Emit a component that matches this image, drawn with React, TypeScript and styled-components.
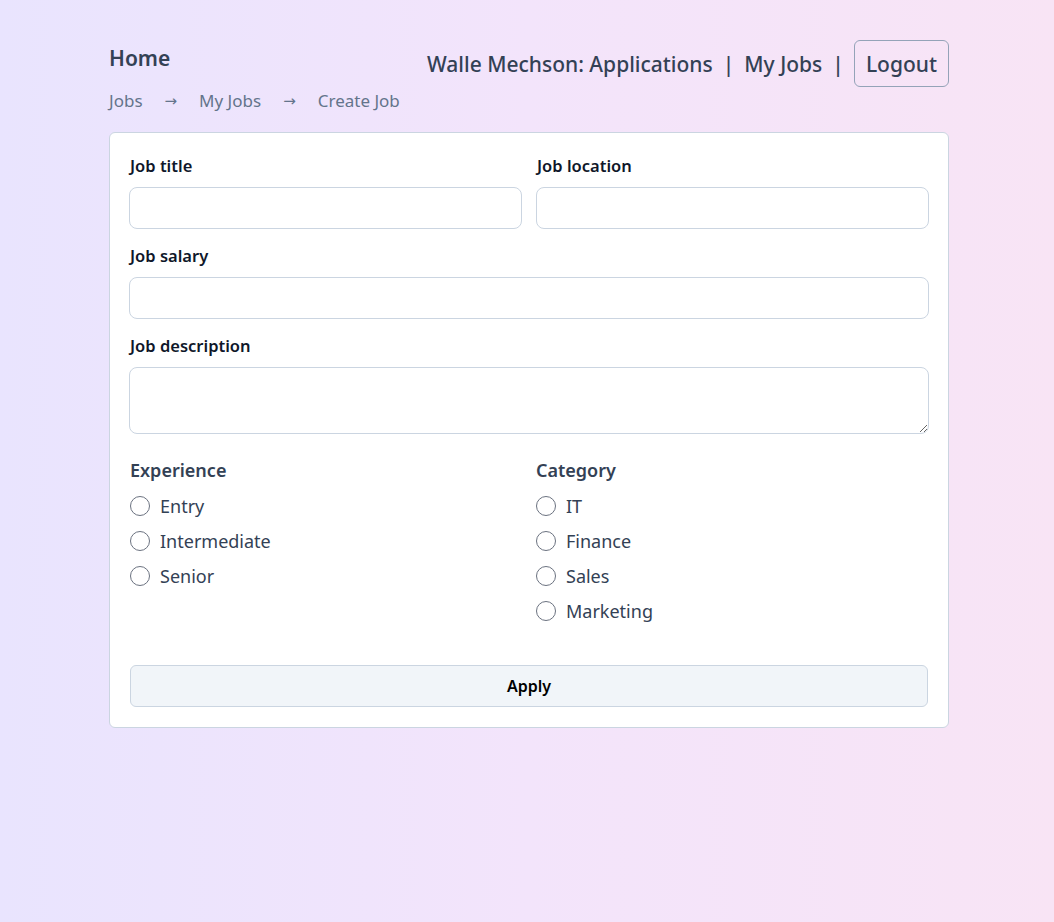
import React from "react";
import styled, { createGlobalStyle } from "styled-components";

const Global = createGlobalStyle`
  html, body { margin: 0; padding: 0; }
  body {
    min-height: 922px;
    padding-left: 4px;
    background: linear-gradient(90deg, #e9e4fe 0%, #f3e4fb 50%, #f8e4f5 100%);
    font-family: "Noto Sans", "Open Sans", sans-serif;
    color: #334155;
  }
  * { box-sizing: border-box; }
`;

const Page = styled.div`
  width: 840px;
  margin: 0 auto;
  padding-top: 40px;
`;

const Header = styled.header`
  display: flex;
  justify-content: space-between;
  align-items: flex-start;
  margin-bottom: 19px;
`;

const LeftCol = styled.div`
  display: flex;
  flex-direction: column;
`;

const Brand = styled.a`
  font-size: 21px;
  font-weight: 600;
  color: #334155;
  line-height: 34px;
  margin-top: 1px;
  text-decoration: none;
`;

const Crumbs = styled.nav`
  display: flex;
  gap: 22px;
  font-size: 17px;
  color: #64748b;
  line-height: 24px;
  margin-top: 14px;
`;

const Arrow = styled.span`
  font-family: "DejaVu Sans", sans-serif;
  font-size: 15px;
`;

const Nav = styled.nav`
  display: flex;
  align-items: center;
  gap: 10px;
  font-size: 21px;
  font-weight: 500;
  color: #334155;
`;

const Logout = styled.button`
  height: 47px;
  padding: 0 11px;
  border: 1px solid #94a3b8;
  border-radius: 6px;
  background: transparent;
  font: inherit;
  font-size: 21px;
  color: #334155;
`;

const Card = styled.form`
  background: #fff;
  border: 1px solid #cbd5e1;
  border-radius: 6px;
  padding: 21px 20px 20px 20px;
  display: flex;
  flex-direction: column;
`;

const Row = styled.div`
  display: grid;
  grid-template-columns: 1fr 1fr;
  column-gap: 14px;
  margin: 0 -1px;
`;

const Field = styled.div<{ $wide?: boolean; $mb?: number }>`
  display: flex;
  flex-direction: column;
  grid-column: ${(p) => (p.$wide ? "1 / span 2" : "auto")};
  margin-bottom: ${(p) => p.$mb ?? 15}px;
`;

const Label = styled.label`
  font-size: 16.5px;
  font-weight: 600;
  color: #0f172a;
  line-height: 24px;
  margin: 0 1px 9px;
`;

const Input = styled.input`
  height: 42px;
  border: 1px solid #cbd5e1;
  border-radius: 8px;
  background: #fff;
  font: inherit;
  padding: 0 10px;
  outline: none;
`;

const TextArea = styled.textarea`
  height: 67px;
  border: 1px solid #cbd5e1;
  border-radius: 8px;
  font: inherit;
  padding: 8px 10px;
  outline: none;
`;

const Groups = styled.div`
  display: grid;
  grid-template-columns: 1fr 1fr;
  column-gap: 14px;
  margin-top: 7px;
`;

const Group = styled.fieldset`
  border: none;
  margin: 0;
  padding: 0;
  display: flex;
  flex-direction: column;
`;

const Legend = styled.div`
  font-size: 18px;
  font-weight: 600;
  color: #334155;
  line-height: 27px;
  margin-bottom: 4px;
`;

const Option = styled.label`
  display: flex;
  align-items: center;
  gap: 10px;
  height: 35px;
  font-size: 18px;
  color: #334155;
`;

const Radio = styled.span`
  width: 20px;
  height: 20px;
  border: 1.5px solid #6b7280;
  border-radius: 50%;
  background: #fff;
  flex: none;
`;

const Apply = styled.button`
  margin-top: 37px;
  height: 42px;
  width: 100%;
  border: 1px solid #cbd5e1;
  border-radius: 6px;
  background: #f1f5f9;
  font-family: "Noto Sans", sans-serif;
  font-size: 16px;
  font-weight: 600;
  color: #000;
`;

export default function App() {
  return (
    <>
      <Global />
      <Page>
        <Header>
          <LeftCol>
            <Brand href="#">Home</Brand>
            <Crumbs>
              <span>Jobs</span>
              <Arrow>→</Arrow>
              <span>My Jobs</span>
              <Arrow>→</Arrow>
              <span>Create Job</span>
            </Crumbs>
          </LeftCol>
          <Nav>
            <span>Walle Mechson: Applications</span>
            <span>|</span>
            <span>My Jobs</span>
            <span>|</span>
            <Logout type="button">Logout</Logout>
          </Nav>
        </Header>
        <Card onSubmit={(e) => e.preventDefault()}>
          <Row>
            <Field>
              <Label>Job title</Label>
              <Input />
            </Field>
            <Field>
              <Label>Job location</Label>
              <Input />
            </Field>
          </Row>
          <Row>
            <Field $wide>
              <Label>Job salary</Label>
              <Input />
            </Field>
          </Row>
          <Row>
            <Field $wide $mb={16}>
              <Label>Job description</Label>
              <TextArea />
            </Field>
          </Row>
          <Groups>
            <Group>
              <Legend>Experience</Legend>
              {["Entry", "Intermediate", "Senior"].map((o) => (
                <Option key={o}>
                  <Radio />
                  {o}
                </Option>
              ))}
            </Group>
            <Group>
              <Legend>Category</Legend>
              {["IT", "Finance", "Sales", "Marketing"].map((o) => (
                <Option key={o}>
                  <Radio />
                  {o}
                </Option>
              ))}
            </Group>
          </Groups>
          <Apply type="submit">Apply</Apply>
        </Card>
      </Page>
    </>
  );
}
